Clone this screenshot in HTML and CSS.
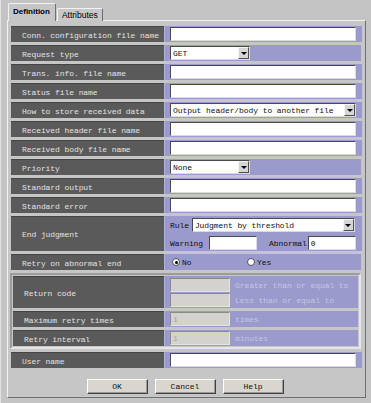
FILE: index.html
```html
<!DOCTYPE html>
<html lang="en">
<head>
  <meta charset="UTF-8">
  <meta name="viewport" content="width=device-width, initial-scale=1.0">
  <title>Definition</title>
  <link rel="stylesheet" href="styles.css">
</head>
<body>
  <div class="window">
    <!-- tabs -->
    <div class="tabs">
      <div class="tab active">Definition</div>
      <div class="tab">Attributes</div>
    </div>

    <div class="panel">
      <div class="form">
        <div class="row">
          <div class="label">Conn. configuration file name</div>
          <div class="value"><input class="text wide" type="text"></div>
        </div>
        <div class="row">
          <div class="label">Request type</div>
          <div class="value">
            <div class="select short"><span class="select-text">GET</span><span class="arrow"></span></div>
          </div>
        </div>
        <div class="row">
          <div class="label">Trans. info. file name</div>
          <div class="value"><input class="text wide" type="text"></div>
        </div>
        <div class="row">
          <div class="label">Status file name</div>
          <div class="value"><input class="text wide" type="text"></div>
        </div>
        <div class="row">
          <div class="label">How to store received data</div>
          <div class="value">
            <div class="select wide"><span class="select-text">Output header/body to another file</span><span class="arrow"></span></div>
          </div>
        </div>
        <div class="row">
          <div class="label">Received header file name</div>
          <div class="value"><input class="text wide" type="text"></div>
        </div>
        <div class="row">
          <div class="label">Received body file name</div>
          <div class="value"><input class="text wide" type="text"></div>
        </div>
        <div class="row">
          <div class="label">Priority</div>
          <div class="value">
            <div class="select short"><span class="select-text">None</span><span class="arrow"></span></div>
          </div>
        </div>
        <div class="row">
          <div class="label">Standard output</div>
          <div class="value"><input class="text wide" type="text"></div>
        </div>
        <div class="row">
          <div class="label">Standard error</div>
          <div class="value"><input class="text wide" type="text"></div>
        </div>
        <div class="row tall">
          <div class="label">End judgment</div>
          <div class="value stack">
            <div class="line">
              <span class="caption">Rule</span>
              <div class="select grow"><span class="select-text">Judgment by threshold</span><span class="arrow"></span></div>
            </div>
            <div class="line">
              <span class="caption">Warning</span>
              <input class="text small warn" type="text">
              <span class="caption abnormal">Abnormal</span>
              <input class="text small" type="text" value="0">
            </div>
          </div>
        </div>
        <div class="row">
          <div class="label">Retry on abnormal end</div>
          <div class="value">
            <div class="option first"><span class="radio checked"></span><span class="caption">No</span></div>
            <div class="option"><span class="radio"></span><span class="caption">Yes</span></div>
          </div>
        </div>
      </div>

      <!-- retry settings, disabled -->
      <div class="group">
        <div class="form">
          <div class="row code">
            <div class="label">Return code</div>
            <div class="value stack">
              <div class="line"><input class="text off" type="text" disabled><span class="dim">Greater than or equal to</span></div>
              <div class="line"><input class="text off" type="text" disabled><span class="dim">Less than or equal to</span></div>
            </div>
          </div>
          <div class="row">
            <div class="label">Maximum retry times</div>
            <div class="value"><input class="text off" type="text" value="1" disabled><span class="dim">times</span></div>
          </div>
          <div class="row">
            <div class="label">Retry interval</div>
            <div class="value"><input class="text off" type="text" value="1" disabled><span class="dim">minutes</span></div>
          </div>
        </div>
      </div>

      <div class="form user">
        <div class="row">
          <div class="label">User name</div>
          <div class="value"><input class="text wide" type="text"></div>
        </div>
      </div>

      <div class="buttons">
        <button>OK</button>
        <button>Cancel</button>
        <button>Help</button>
      </div>
    </div>
  </div>
</body>
</html>
```

FILE: styles.css
```css
* { box-sizing: border-box; margin: 0; padding: 0; }

body {
  background: #c4c4c4;
  font-family: 'Liberation Mono', 'DejaVu Sans Mono', monospace;
  font-size: 8px;
  letter-spacing: -0.08px;
}

.window {
  width: 371px;
  height: 403px;
  padding: 3px 0 0 6px;
  border-left: 1px solid #e2e2e2;
}

/* 탭 */
.tabs {
  display: flex;
  align-items: flex-end;
  height: 18px;
  margin-left: 1px;
  margin-bottom: -1px;
  letter-spacing: 0;
}

.tab {
  font-family: 'Liberation Sans', Arial, sans-serif;
  font-size: 8.5px;
  height: 13px;
  line-height: 12px;
  padding: 0 4px;
  background: #c8c8c8;
  border: 1px solid #f2f2f2;
  border-right-color: #6e6e6e;
  border-bottom: none;
  border-radius: 2px 2px 0 0;
}

.tab.active {
  font-size: 8px;
  font-weight: bold;
  height: 18px;
  line-height: 16px;
  padding: 0 5px 0 4px;
  margin-right: 1px;
  background: #c6c6c6;
}

.panel {
  width: 359px;
  height: 378px;
  padding: 5px 4px 0 3px;
  background: #c6c6c6;
  border: 1px solid #f2f2f2;
  border-right-color: #707070;
  border-bottom-color: #707070;
}

.form {
  display: flex;
  flex-direction: column;
  gap: 3px;
}

.row {
  display: flex;
  height: 16px;
}

.row.tall { height: 35px; }
.row.code { height: 32px; }

.label {
  width: 153px;
  flex: none;
  display: flex;
  align-items: center;
  padding-left: 11px;
  padding-top: 1px;
  background: #5a5a5a;
  border-top: 1px solid #444;
  color: #e2e2e2;
  white-space: nowrap;
}

.value {
  flex: 1;
  display: flex;
  align-items: center;
  padding: 0 6px 0 5px;
  background: #9a9acc;
  border-left: 1px solid #b0b0de;
}

.value.stack {
  flex-direction: column;
  align-items: stretch;
  justify-content: space-between;
  padding-top: 2px;
  padding-bottom: 1px;
}

.line {
  display: flex;
  align-items: center;
  height: 14px;
}

.caption { color: #111; white-space: nowrap; }

/* 입력창 */
.text {
  height: 14px;
  background: #fff;
  border: 1px solid #dcdcdc;
  border-top-color: #4a4a4a;
  border-left-color: #4a4a4a;
  font-family: inherit;
  font-size: 8px;
  padding: 0 2px;
  outline: none;
}

.text.wide { width: 186px; }
.text.small { width: 48px; }
.text.warn { margin-left: 6px; margin-right: 12px; }
.abnormal { margin-right: 1px; }

.text.off {
  width: 60px;
  background: #d4d2cc;
  color: #a4a4a4;
  border-color: #e4e4e4;
  border-top-color: #8a8a8a;
  border-left-color: #8a8a8a;
}

.dim {
  color: #c6c6e2;
  margin-left: 5px;
  white-space: nowrap;
}

/* 콤보박스 */
.select {
  display: flex;
  align-items: center;
  height: 14px;
  background: #fff;
  border: 1px solid #dcdcdc;
  border-top-color: #4a4a4a;
  border-left-color: #4a4a4a;
  padding-left: 2px;
}

.select.short { width: 80px; }
.select.wide { width: 186px; }
.select.grow { flex: 1; margin-left: 3px; margin-right: 1px; }

.select-text { flex: 1; white-space: nowrap; overflow: hidden; color: #111; }

.arrow {
  width: 11px;
  height: 12px;
  background: #d6d6d6;
  border: 1px solid #f4f4f4;
  border-right-color: #505050;
  border-bottom-color: #505050;
  display: flex;
  align-items: center;
  justify-content: center;
}

.arrow::after {
  content: '';
  border-left: 3px solid transparent;
  border-right: 3px solid transparent;
  border-top: 3px solid #000;
}

/* 라디오 */
.option {
  display: flex;
  align-items: center;
  width: 77px;
  flex: none;
}

.option.first { padding-left: 2px; }

.radio {
  width: 8px;
  height: 8px;
  margin-right: 2px;
  flex: none;
  border-radius: 50%;
  background: #fff;
  border: 1px solid #505050;
  display: flex;
  align-items: center;
  justify-content: center;
}

.radio.checked::after {
  content: '';
  width: 3px;
  height: 3px;
  border-radius: 50%;
  background: #000;
}

/* 재시도 그룹 */
.group {
  width: 351px;
  margin: 3px 0 0 -1px;
  padding: 1px;
  border: 2px solid #e6e6e6;
  border-top-color: #9c9c9c;
  border-left-color: #9c9c9c;
}

.group .label { width: 151px; }

.form.user { margin-top: 3px; }

.buttons {
  display: flex;
  justify-content: center;
  gap: 7px;
  margin-top: 11px;
  padding-right: 2px;
}

button {
  width: 61px;
  height: 15px;
  font-family: inherit;
  font-size: 8px;
  color: #111;
  background: #d8d6ce;
  border: 1px solid #fff;
  border-right-color: #404040;
  border-bottom-color: #404040;
  box-shadow: inset -1px -1px 0 #9a9a9a;
}
```
